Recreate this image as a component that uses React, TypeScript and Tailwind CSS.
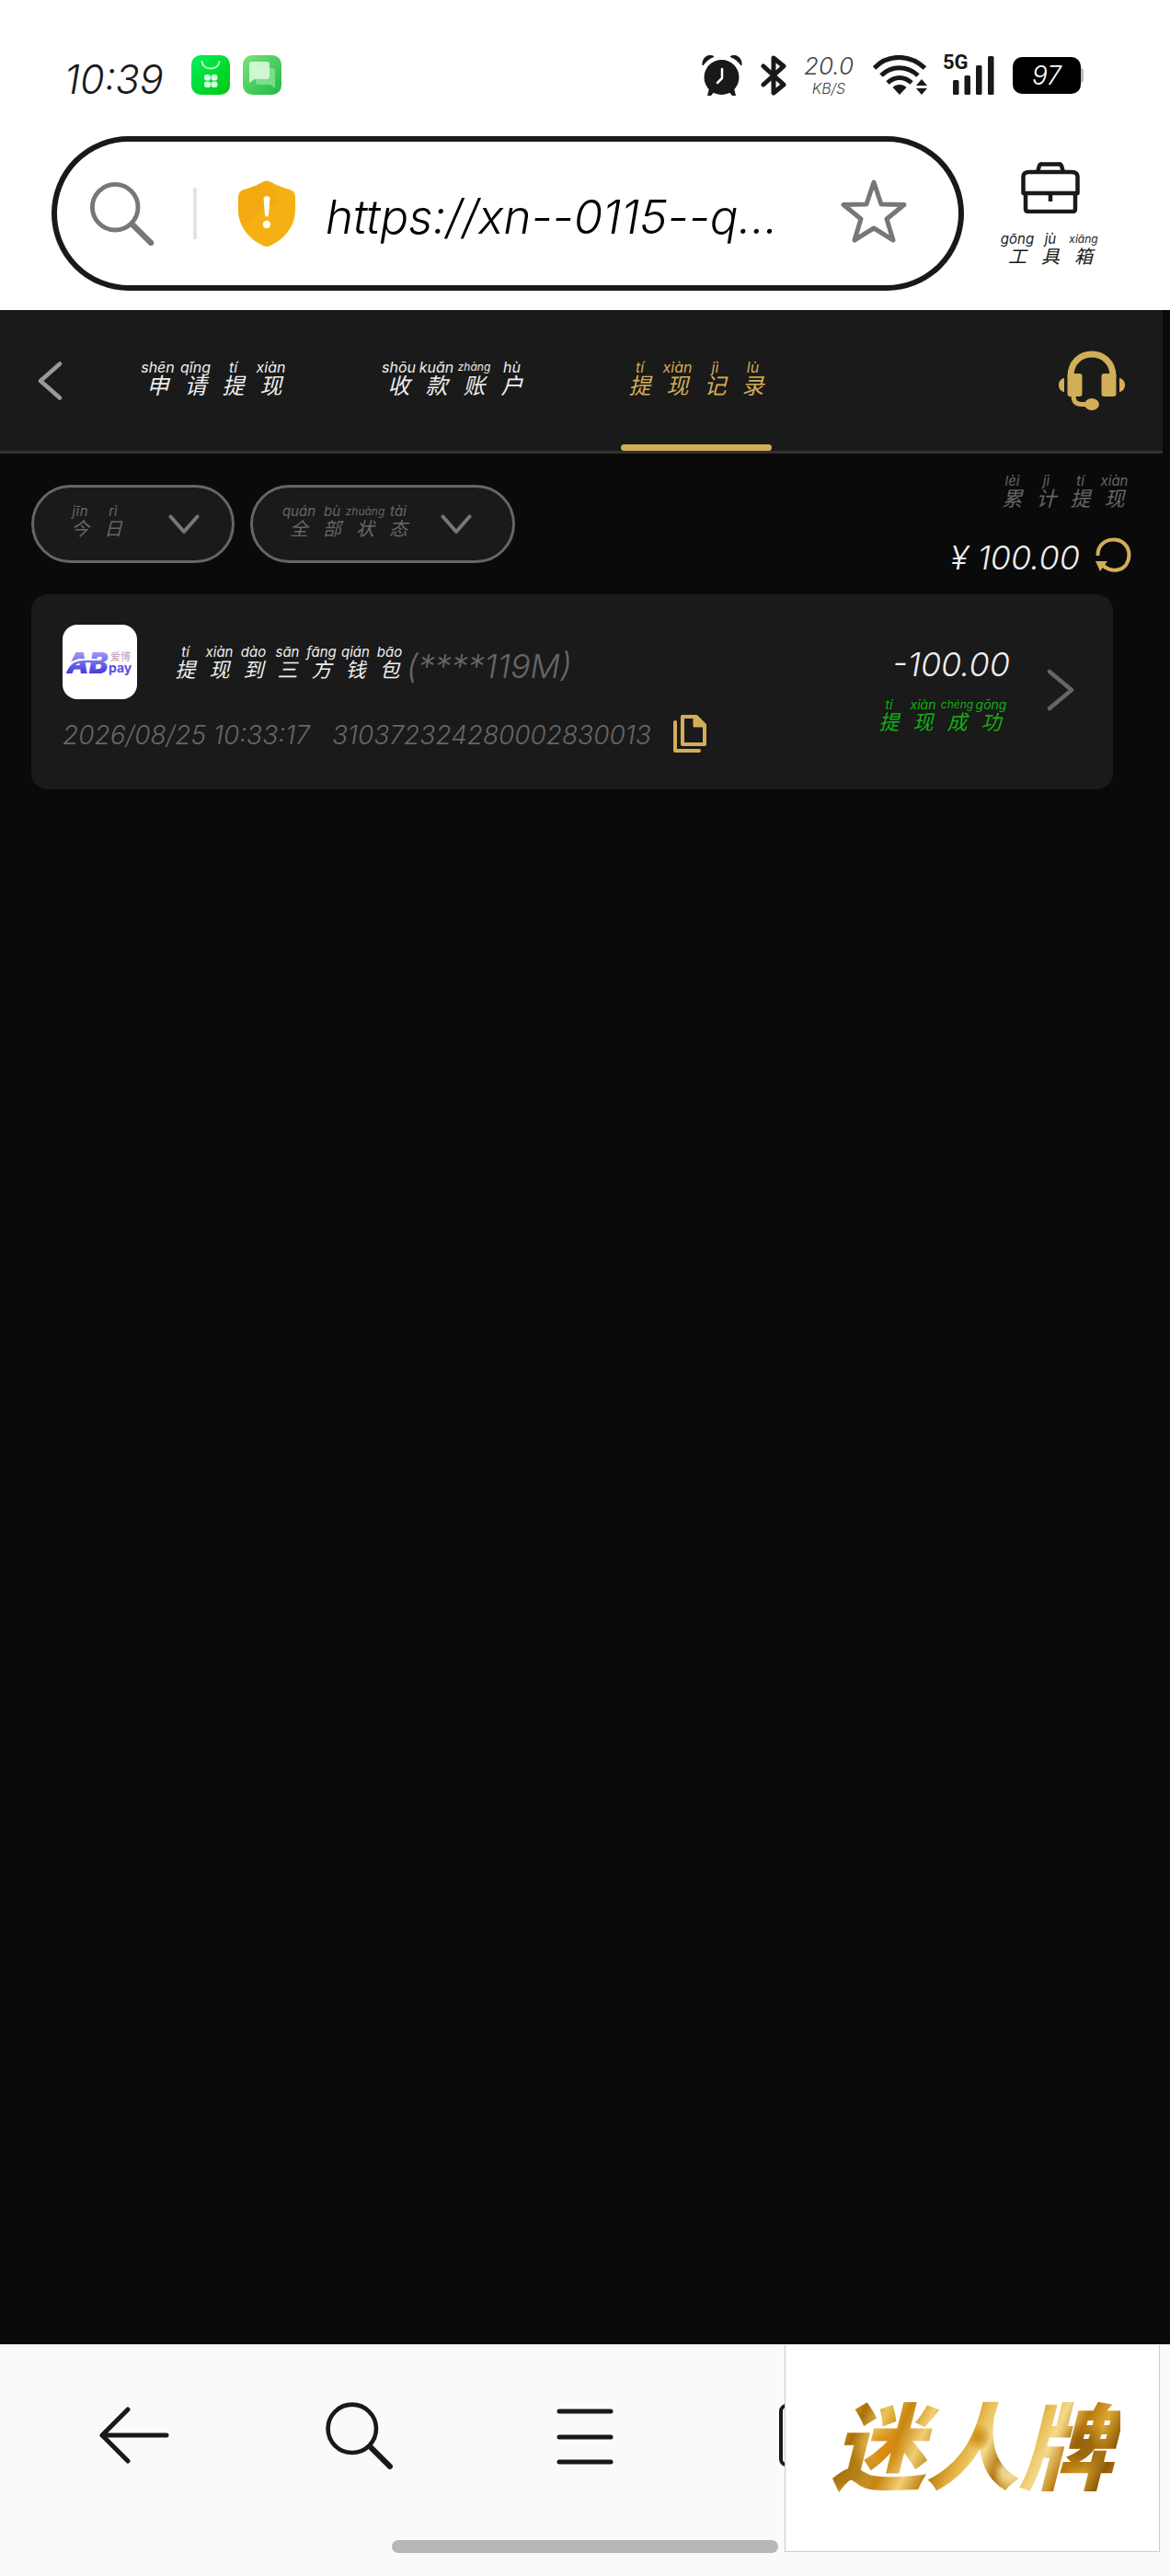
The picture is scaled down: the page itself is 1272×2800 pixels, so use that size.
import React from "react";

type Syllable = [string, string];

const sizes = {
  xs: { cell: "w-9", text: "text-[20px] leading-5", rt: "text-[15px] leading-4" },
  sm: { cell: "w-[37px]", text: "text-[22px] leading-5", rt: "text-sm leading-4" },
  md: { cell: "w-[37px]", text: "text-[22px] leading-5", rt: "text-[15px] leading-4" },
  lg: { cell: "w-[41px]", text: "text-2xl leading-6", rt: "text-base leading-4" },
};

function Pinyin({ items, size }: { items: Syllable[]; size: keyof typeof sizes }) {
  const s = sizes[size];
  return (
    <span className="flex font-normal">
      {items.map(([hanzi, reading], i) => (
        <ruby key={i} className={`flex flex-col-reverse items-center gap-px ${s.cell} ${s.text}`}>
          {hanzi}
          <rt className={`block whitespace-nowrap ${reading.length > 4 ? "text-xs leading-4" : s.rt}`}>{reading}</rt>
        </ruby>
      ))}
    </span>
  );
}

function SearchGlyph({ className, width }: { className: string; width: number }) {
  return (
    <svg viewBox="0 0 72 72" fill="none" stroke="currentColor" strokeLinecap="round" className={className} aria-hidden="true">
      <circle cx="28" cy="29" r="25.5" strokeWidth={width} />
      <path d="M47 48 L68 69" strokeWidth={width + 1.5} />
    </svg>
  );
}

function StatusBar() {
  return (
    <div className="flex h-[148px] items-center justify-between pl-[70px] pr-[94px] pt-4 text-[#191919]">
      <div className="flex items-center">
        <time className="w-[138px] pt-2 text-[43px] leading-none font-light">10:39</time>
        <svg viewBox="0 0 98 44" className="h-11 w-[98px]" aria-hidden="true">
          <defs>
            <linearGradient id="g1" x1="0" y1="0" x2="1" y2="1">
              <stop offset="0" stopColor="#05f05c" />
              <stop offset="1" stopColor="#02c80d" />
            </linearGradient>
            <linearGradient id="g2" x1="0" y1="0" x2="1" y2="1">
              <stop offset="0" stopColor="#7be27a" />
              <stop offset="1" stopColor="#1fba45" />
            </linearGradient>
          </defs>
          <rect width="42" height="43" rx="10" fill="url(#g1)" />
          <path d="M11.500 7 C13 17 29 17 30.500 7" fill="none" stroke="#b5ffc4" strokeWidth="2" strokeLinecap="round" />
          <g fill="#d6ffe0">
            <rect x="14" y="21" width="7" height="6.500" rx="2.800" />
            <rect x="21.500" y="21" width="7" height="6.500" rx="2.800" />
            <rect x="14" y="28.500" width="7" height="6.500" rx="2.800" />
            <rect x="21.500" y="28.500" width="7" height="6.500" rx="2.800" />
          </g>
          <rect x="56" width="42" height="43" rx="10" fill="url(#g2)" />
          <path d="M72 14 h16 a3 3 0 0 1 3 3 v19 l-5 -4 h-13 a3 3 0 0 1 -3 -3 v-12 z" fill="#8fe59a" opacity=".75" />
          <path d="M66 7 h16 a3 3 0 0 1 3 3 v13 a3 3 0 0 1 -3 3 h-13 l-6 4 v-20 a3 3 0 0 1 3 -3 z" fill="#d9fbd9" opacity=".9" />
        </svg>
      </div>
      <div className="flex items-center">
        <svg viewBox="0 0 44 44" className="mr-5 size-11" aria-hidden="true">
          <g fill="currentColor">
            <circle cx="21.500" cy="24" r="19" />
            <path d="M1 11 C0 3 7 -2 13 1.500 C8 3.500 4.500 6.500 1 11 Z M43 11 C44 3 37 -2 31 1.500 C36 3.500 39.500 6.500 43 11 Z" stroke="currentColor" strokeWidth="1" />
            <path d="M8 36 L6 44 L10 44 L15 38 Z M35 36 L37 44 L33 44 L28 38 Z" />
          </g>
          <path d="M22 15 V25 L17 30" fill="none" stroke="#fff" strokeWidth="2.500" strokeLinecap="round" />
        </svg>
        <svg viewBox="0 0 28 44" className="mr-3.5 h-11 w-7" fill="none" stroke="currentColor" strokeWidth="5" strokeLinejoin="round" strokeLinecap="round" aria-hidden="true">
          <path d="M3 12 L25 32 L14 41 V3 L25 12 L3 32" />
        </svg>
        <div className="flex w-[64px] flex-col items-center text-[#444]">
          <span className="text-[26px] leading-7 font-light">20.0</span>
          <span className="text-base leading-5 font-light">KB/S</span>
        </div>
        <svg viewBox="0 0 60 44" className="ml-4 h-11 w-[60px]" fill="none" stroke="currentColor" strokeWidth="5" aria-hidden="true">
          <path d="M1.500 14 C16 -1.500 40 -1.500 56.500 14" />
          <path d="M9 22 C20 11 37 11 49 22" />
          <path d="M16 30 C24 22.500 34 22.500 42 30" />
          <path d="M29 43 L21.500 35 C25 31 33 31 36.500 35 Z" fill="currentColor" stroke="none" />
          <path d="M53 26 l6 7 h-12 z M53 43 l6 -7 h-12 z" fill="currentColor" stroke="none" />
        </svg>
        <div className="relative ml-4 h-11 w-14">
          <span className="absolute -top-1 left-0 text-[22px] leading-6 font-bold not-italic font-['Roboto',sans-serif]">5G</span>
          <svg viewBox="0 0 56 44" className="size-full" fill="currentColor" aria-hidden="true">
            <rect x="11" y="27" width="6.500" height="16" rx="1.500" />
            <rect x="23.500" y="22" width="6.500" height="21" rx="1.500" />
            <rect x="36" y="11" width="6.500" height="32" rx="1.500" />
            <rect x="49" y="1" width="6.500" height="42" rx="1.500" />
          </svg>
        </div>
        <div className="ml-5 flex items-center">
          <span className="flex h-10 w-[74px] items-center justify-center rounded-[10px] bg-black text-[28px] text-white">97</span>
          <span className="h-4 w-[3px] rounded-r-sm bg-[#bbb]" />
        </div>
      </div>
    </div>
  );
}

function AddressBar() {
  return (
    <div className="flex items-center gap-10 pb-[21px] pl-14 pr-[76px]">
      <div className="flex h-[168px] min-w-0 flex-1 items-center rounded-full border-[6px] border-[#191919] pl-9 pr-14">
        <SearchGlyph className="size-[70px] shrink-0 text-[#777]" width={5} />
        <span className="ml-[42px] h-14 w-1 shrink-0 bg-[#e3e3e3]" />
        <svg viewBox="0 0 64 72" className="ml-11 h-[72px] w-16 shrink-0" aria-hidden="true">
          <path d="M27 2 Q32 -1 37 2 C44 6 50 8 57 10 Q63 12 63 18 V32 C63 52 49 65 36 71 Q32 73 28 71 C15 65 1 52 1 32 V18 Q1 12 7 10 C14 8 20 6 27 2 Z" fill="#f5b013" />
          <path d="M4 12 C18 7 24 6 32 1 C40 8 44 16 45 26 C30 27 14 38 9 52 C3 46 1 40 1 32 V18 Z" fill="#f0a50f" opacity=".55" />
          <path d="M28.500 19 Q32 15 35.500 19 L34 38 Q32 41 30 38 Z" fill="#fff" />
          <circle cx="32" cy="48" r="4.200" fill="#fff" />
        </svg>
        <input
          aria-label="网址"
          readOnly
          value="https://xn--0115--q..."
          className="ml-8 min-w-0 flex-1 bg-transparent pt-2 text-[51px] leading-[60px] font-light text-black italic outline-none"
        />
        <button aria-label="收藏" className="shrink-0 pb-1 text-[#777]">
          <svg viewBox="0 0 72 70" className="h-[70px] w-[72px]" fill="none" stroke="currentColor" strokeWidth="5" strokeLinejoin="round" aria-hidden="true">
            <path d="M36 3 L44 27 L69 27.500 L50 43 L57 66 L36 53 L15 66 L22 43 L3 27.500 L28 27 Z" />
          </svg>
        </button>
      </div>
      <button className="flex flex-col items-center text-[#191919] italic">
        <svg viewBox="0 0 64 56" className="mb-5 h-14 w-16" fill="none" stroke="currentColor" strokeWidth="4.500" strokeLinejoin="round" aria-hidden="true">
          <path d="M18 11 L20 4 Q21 2 23 2.500 H41 Q43 2 44 4 L46 11" />
          <path d="M2.500 34 V17 Q2 11 9 11 H55 Q62 11 61.500 17 V34 Z" />
          <path d="M5 34 V51 Q5 54 8 54 H56 Q59 54 59 51 V34 M32 34 V43" />
        </svg>
        <Pinyin size="xs" items={[["工", "gōng"], ["具", "jù"], ["箱", "xiāng"]]} />
      </button>
    </div>
  );
}

const tabs: Syllable[][] = [
  [["申", "shēn"], ["请", "qǐng"], ["提", "tí"], ["现", "xiàn"]],
  [["收", "shōu"], ["款", "kuǎn"], ["账", "zhàng"], ["户", "hù"]],
  [["提", "tí"], ["现", "xiàn"], ["记", "jì"], ["录", "lù"]],
];

function PageHeader() {
  return (
    <header className="mr-2 flex h-[156px] items-center border-b-[3px] border-[#333] bg-[#1a1a1a] pl-10 pr-10">
      <button aria-label="返回" className="text-[#999]">
        <svg viewBox="0 0 30 42" className="h-[42px] w-[30px]" fill="none" stroke="currentColor" strokeWidth="4.500" strokeLinecap="round" strokeLinejoin="round" aria-hidden="true">
          <path d="M25 2.500 L4 21 L25 39.500" />
        </svg>
      </button>
      <nav className="ml-[81px] flex h-full items-center gap-[98px]">
        {tabs.map((items, i) => (
          <a
            key={i}
            href="#"
            aria-current={i === 2 ? "page" : undefined}
            className={i === 2 ? "relative flex h-full items-center pb-1 text-[#d2ae58]" : "flex h-full items-center pb-1 text-[#eee]"}
          >
            <Pinyin size="lg" items={items} />
            {i === 2 && <span className="absolute inset-x-0 bottom-0 h-[7px] rounded-full bg-[#d2ae58]" />}
          </a>
        ))}
      </nav>
      <button aria-label="客服" className="ml-auto text-[#d2ae58]">
        <svg viewBox="0 0 74 66" className="h-[66px] w-[74px]" aria-hidden="true">
          <path d="M14 28 C14 -4 60 -4 60 28" fill="none" stroke="currentColor" strokeWidth="7" />
          <g fill="currentColor">
            <rect x="10.500" y="25" width="16" height="25" rx="3" />
            <rect x="47.500" y="25" width="16" height="25" rx="3" />
            <path d="M7 30 V45 C-1 44 -1 31 7 30 Z M67 30 V45 C75 44 75 31 67 30 Z" />
            <ellipse cx="37" cy="58.500" rx="8" ry="6.500" />
          </g>
          <path d="M17 49 C17 56 20 58.500 26 58.500 H34" fill="none" stroke="currentColor" strokeWidth="5" />
        </svg>
      </button>
    </header>
  );
}

function Filter({ label, value, items, spacing }: { label: string; value: string; items: Syllable[]; spacing: string }) {
  return (
    <label className={`relative flex h-[85px] items-center rounded-full border-[3px] border-[#666] bg-[#1a1a1a] text-[#666] ${spacing}`}>
      <span aria-hidden="true" className="pb-1.5">
        <Pinyin size="xs" items={items} />
      </span>
      <svg viewBox="0 0 34 22" className="h-[22px] w-[34px]" fill="none" stroke="#777" strokeWidth="4" strokeLinecap="round" strokeLinejoin="round" aria-hidden="true">
        <path d="M2.500 2.500 L17 19 L31.500 2.500" />
      </svg>
      <select aria-label={label} className="absolute inset-0 size-full appearance-none rounded-full opacity-0">
        <option>{value}</option>
      </select>
    </label>
  );
}

function Summary() {
  return (
    <section className="flex justify-between pl-[34px] pr-[42px] pt-[22px]">
      <div className="flex gap-[17px] pt-3">
        <Filter label="日期" value="今日" spacing="gap-[42px] pl-8 pr-[35px]" items={[["今", "jīn"], ["日", "rì"]]} />
        <Filter label="状态" value="全部状态" spacing="gap-7 pl-8 pr-11" items={[["全", "quán"], ["部", "bù"], ["状", "zhuàng"], ["态", "tài"]]} />
      </div>
      <div className="flex flex-col items-end">
        <div className="text-[#666]">
          <Pinyin size="md" items={[["累", "lèi"], ["计", "jì"], ["提", "tí"], ["现", "xiàn"]]} />
        </div>
        <div className="mt-8 flex items-center gap-4">
          <span className="text-4xl leading-10 font-light text-[#eee]">¥ 100.00</span>
          <button aria-label="刷新" className="pb-1.5 text-[#d2ae58]">
            <svg viewBox="0 0 40 38" className="h-[38px] w-10" aria-hidden="true">
              <path d="M3.500 20 C3 -3 37 -3 37.500 19 C37 38 16 40 8 29" fill="none" stroke="currentColor" strokeWidth="4" />
              <path d="M1 26 H14 L6 37 Z" fill="currentColor" />
            </svg>
          </button>
        </div>
      </div>
    </section>
  );
}

function PayLogo() {
  return (
    <svg viewBox="0 0 81 81" className="size-[81px] shrink-0 rounded-2xl bg-white" role="img" aria-label="AB pay 爱博">
      <defs>
        <linearGradient id="ab" x1="0" y1="27" x2="0" y2="55" gradientUnits="userSpaceOnUse">
          <stop offset="0" stopColor="#a9a4f0" />
          <stop offset="1" stopColor="#3c33dc" />
        </linearGradient>
        <linearGradient id="cn" x1="50" y1="0" x2="74" y2="0" gradientUnits="userSpaceOnUse">
          <stop offset="0" stopColor="#c98d96" />
          <stop offset="1" stopColor="#ad9fd6" />
        </linearGradient>
      </defs>
      <text x="4" y="53" fontSize="31" fontWeight="900" fill="url(#ab)">AB</text>
      <path d="M3 53 C6 43 12 39 22 39 H42" fill="none" stroke="#fff" strokeWidth="4" />
      <path d="M5 53 C9 43 14 40 26 40 H42" fill="none" stroke="url(#ab)" strokeWidth="2.500" />
      <text x="52" y="39" fontSize="11" fontWeight="400" fontStyle="normal" fill="url(#cn)">爱博</text>
      <text x="50" y="52" fontSize="14" fontWeight="700" fontStyle="normal" fill="#5a50e0">pay</text>
    </svg>
  );
}

function RecordCard() {
  return (
    <article className="ml-[34px] mr-[62px] mt-[18px] flex h-[212px] items-center rounded-[18px] bg-[#1a1a1a] pb-1 pl-[34px] pr-10">
      <div className="flex min-w-0 flex-1 flex-col">
        <div className="flex items-center">
          <PayLogo />
          <h2 className="ml-[34px] flex items-end font-light text-[#eee]">
            <Pinyin
              size="md"
              items={[["提", "tí"], ["现", "xiàn"], ["到", "dào"], ["三", "sān"], ["方", "fāng"], ["钱", "qián"], ["包", "bāo"]]}
            />
            <span className="text-4xl leading-7 text-[#666]">(****119M)</span>
          </h2>
        </div>
        <div className="mt-4 flex items-center text-[28px] leading-[42px] font-light text-[#666]">
          <time>2026/08/25 10:33:17</time>
          <span className="ml-6">310372324280002830013</span>
          <button aria-label="复制" className="ml-6 pb-1 text-[#d2ae58]">
            <svg viewBox="0 0 36 42" className="h-[42px] w-9" fill="none" stroke="currentColor" strokeWidth="4" strokeLinejoin="round" aria-hidden="true">
              <path d="M10 3 H25 L34 12 V33 H10 Z" />
              <path d="M22 2 V14 H34 Z" fill="currentColor" strokeWidth="1" />
              <path d="M2 9 V40 H28" strokeLinecap="round" />
            </svg>
          </button>
        </div>
      </div>
      <div className="flex flex-col items-end pb-1 pr-9">
        <span className="text-4xl leading-10 font-light text-[#eee]">-100.00</span>
        <div className="mt-4 pr-0.5 text-[#12b012]">
          <Pinyin size="sm" items={[["提", "tí"], ["现", "xiàn"], ["成", "chéng"], ["功", "gōng"]]} />
        </div>
      </div>
      <button aria-label="查看详情" className="text-[#666]">
        <svg viewBox="0 0 36 46" className="h-[46px] w-9" fill="none" stroke="currentColor" strokeWidth="4.500" strokeLinecap="round" strokeLinejoin="round" aria-hidden="true">
          <path d="M7 3 L31 23 L7 43" />
        </svg>
      </button>
    </article>
  );
}

function BottomNav() {
  return (
    <footer className="relative h-[252px] overflow-hidden border-t border-[#ddd] bg-[#fafafa] text-[#191919]">
      <nav className="grid grid-cols-5 justify-items-center px-6 pt-[58px]">
        <button aria-label="后退">
          <svg viewBox="0 0 76 80" className="h-20 w-[76px]" fill="none" stroke="currentColor" strokeWidth="5" strokeLinecap="round" strokeLinejoin="round" aria-hidden="true">
            <path d="M31 12 L3 40 L31 68 M3 40 H73" />
          </svg>
        </button>
        <button aria-label="搜索">
          <SearchGlyph className="size-[74px]" width={4.5} />
        </button>
        <button aria-label="菜单">
          <svg viewBox="0 0 62 80" className="h-20 w-[62px]" fill="none" stroke="currentColor" strokeWidth="5" strokeLinecap="round" aria-hidden="true">
            <path d="M3 14 H59 M3 42 H59 M3 69 H59" />
          </svg>
        </button>
        <button aria-label="标签页">
          <span className="block h-[68px] w-[68px] rounded-lg border-4 border-[#191919]" />
        </button>
      </nav>
      <div className="absolute bottom-[25px] left-1/2 h-3.5 w-[420px] -translate-x-1/2 rounded-full bg-[#b7b7b7]" />
      <div className="absolute right-[11px] top-0 flex h-[225px] w-[408px] items-center justify-center border border-t-0 border-[#ccc] bg-white">
        <span className="bg-[radial-gradient(circle_at_20%_50%,#d98a10cc_0_3%,transparent_9%),radial-gradient(circle_at_52%_40%,#c98a12cc_0_2%,transparent_8%),radial-gradient(circle_at_88%_50%,#8f5a08cc_0_3%,transparent_10%),radial-gradient(circle_at_8%_70%,#a8700acc_0_4%,transparent_11%),radial-gradient(circle_at_62%_72%,#f7e3a6cc_0_3%,transparent_8%),linear-gradient(115deg,#b07a10_0%,#dca62e_8%,#a86f08_14%,#ecc35a_20%,#c98410_27%,#f0cf74_34%,#b9780c_41%,#e5b344_48%,#f3d98a_54%,#b06f08_60%,#e8bd55_67%,#f3d98a_72%,#b9780c_79%,#dca62e_85%,#8f5a08_91%,#cf9726_100%)] bg-clip-text px-2 text-[102px] leading-[120px] font-black text-transparent">
          迷人牌
        </span>
      </div>
    </footer>
  );
}

export default function App() {
  return (
    <div className="flex min-h-screen flex-col bg-[#0a0a0a] font-['Inter','Noto_Sans_CJK_SC',sans-serif] font-light italic">
      <div className="bg-white">
        <StatusBar />
        <AddressBar />
      </div>
      <main className="flex-1">
        <PageHeader />
        <Summary />
        <RecordCard />
      </main>
      <BottomNav />
    </div>
  );
}
